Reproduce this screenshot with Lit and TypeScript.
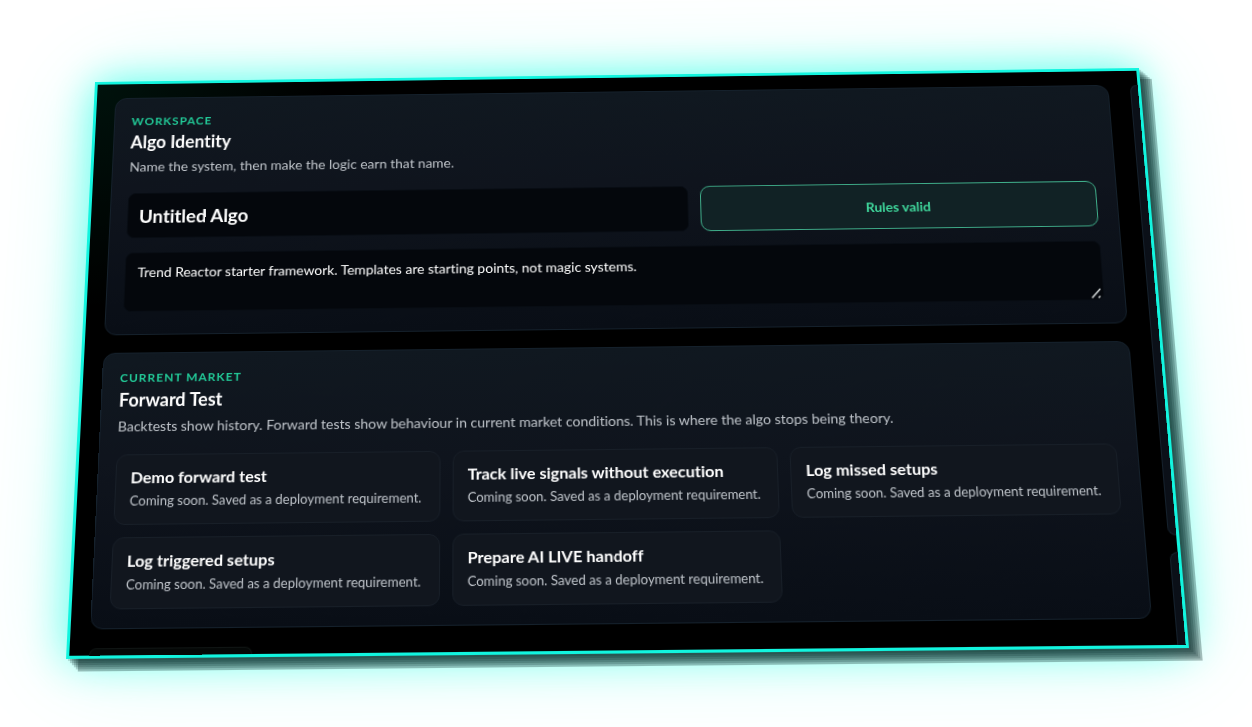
import { LitElement, html, css } from "lit";
import { customElement, property, state } from "lit/decorators.js";

interface Requirement {
  title: string;
  note: string;
}

const NOTE = "Coming soon. Saved as a deployment requirement.";

@customElement("section-card")
class SectionCard extends LitElement {
  @property() eyebrow = "";
  @property() heading = "";
  @property() description = "";

  static styles = css`
    :host {
      display: block;
    }
    .card {
      border: 1px solid #15212c;
      border-radius: 12px;
      padding: 17px 20px 18px 17px;
      background: linear-gradient(180deg, #101820 0%, #0f141d 40%, #090e16 100%);
    }
    .eyebrow {
      margin: 0;
      color: #22c997;
      font-size: 12px;
      line-height: 16px;
      font-weight: 700;
      letter-spacing: 1px;
      text-transform: uppercase;
    }
    .heading {
      margin: 0;
      color: #fff;
      font-size: 18px;
      line-height: 28px;
      font-weight: 700;
    }
    .description {
      margin: 0 0 15px;
      color: #bfc4ca;
      font-size: 14px;
      line-height: 26px;
    }
  `;

  render() {
    return html`
      <section class="card">
        <p class="eyebrow">${this.eyebrow}</p>
        <h2 class="heading">${this.heading}</h2>
        <p class="description">${this.description}</p>
        <slot></slot>
      </section>
    `;
  }
}

@customElement("app-root")
class AppRoot extends LitElement {
  @state() private algoName = "Untitled Algo";
  @state() private notes =
    "Trend Reactor starter framework. Templates are starting points, not magic systems.";

  private requirements: Requirement[] = [
    { title: "Demo forward test", note: NOTE },
    { title: "Track live signals without execution", note: NOTE },
    { title: "Log missed setups", note: NOTE },
    { title: "Log triggered setups", note: NOTE },
    { title: "Prepare AI LIVE handoff", note: NOTE },
  ];

  static styles = css`
    :host {
      display: block;
      box-sizing: border-box;
      min-height: 100vh;
      padding: 82px 77px 54px 95px;
      overflow: hidden;
      background: #fff;
      font-family: Lato, "Liberation Sans", sans-serif;
      font-variant-ligatures: none;
    }
    * {
      box-sizing: border-box;
    }
    /* The whole panel is tilted away from the viewer around its top left corner. */
    .panel {
      display: grid;
      grid-template-columns: minmax(0, 1fr) 8px;
      column-gap: 22px;
      padding: 15px 0 0 19px;
      border: 3px solid #12f5df;
      background: radial-gradient(circle at 0 0, #00120c 0, #000 240px);
      transform-origin: 0 0;
      transform: matrix3d(
        0.960382, -0.012879, 0, -0.000006019,
        -0.045709, 0.909453, 0, -0.00011874,
        0, 0, 1, 0,
        0, 0, 0, 1
      );
      will-change: transform;
      box-shadow:
        2px 2px 0 rgba(0, 32, 30, 0.15),
        4px 4px 0 rgba(0, 32, 30, 0.2),
        6px 6px 0 rgba(0, 32, 30, 0.2),
        8px 8px 0 rgba(0, 32, 30, 0.2),
        10px 10px 0 rgba(0, 32, 30, 0.2),
        12px 12px 0 rgba(0, 32, 30, 0.3),
        0 0 40px rgba(0, 255, 225, 0.6),
        0 0 90px rgba(0, 255, 225, 0.2);
    }
    .main {
      display: flex;
      flex-direction: column;
      gap: 18px;
    }
    .rail {
      display: grid;
      grid-template-rows: 464px 1fr;
      gap: 16px;
    }
    .rail-card {
      border: 1px solid #15212c;
      border-right: 0;
      border-radius: 12px 0 0 12px;
      background: #0b1018;
    }
    .rail-card:last-child {
      border-bottom: 0;
      border-bottom-left-radius: 0;
    }
    .identity {
      display: grid;
      grid-template-columns: 1.42fr 1fr;
      gap: 15px 12px;
      padding-bottom: 5px;
    }
    .name,
    .notes {
      display: block;
      width: 100%;
      margin: 0;
      border: 1px solid #080d14;
      border-radius: 8px;
      background: #04070c;
      color: #fff;
      font-family: inherit;
      font-variant-ligatures: inherit;
      outline: none;
    }
    .name {
      height: 48px;
      padding: 0 11px;
      font-size: 19px;
      font-weight: 700;
    }
    .notes {
      grid-column: 1 / -1;
      height: 62px;
      padding: 10px 12px;
      font-size: 14px;
      line-height: 20px;
      resize: vertical;
    }
    .notes::-webkit-resizer {
      background: url("data:image/svg+xml,%3Csvg xmlns='http://www.w3.org/2000/svg' viewBox='0 0 15 15'%3E%3Cpath d='M4 13 12 4.500M10.500 13l1-1' stroke='%23d8dcdc' stroke-width='1.500' stroke-linecap='round'/%3E%3C/svg%3E")
        center / 15px 15px no-repeat;
    }
    .status {
      border: 1px solid #3fae8a;
      border-radius: 10px;
      background: #112225;
      color: #3fd69b;
      font-family: inherit;
      font-size: 14px;
      font-weight: 700;
    }
    .tiles {
      display: grid;
      grid-template-columns: repeat(3, minmax(0, 1fr));
      gap: 12px;
      margin: 0;
      padding: 0;
      list-style: none;
    }
    .tile {
      border: 1px solid #181f28;
      border-radius: 11px;
      padding: 10px 14px 12px;
      background: #11161e;
    }
    .tile-title {
      margin: 0;
      color: #fff;
      font-size: 16px;
      line-height: 24px;
      font-weight: 700;
    }
    .tile-note {
      margin: 0;
      color: #bfc4ca;
      font-size: 13px;
      line-height: 22px;
    }
    .next {
      width: 158px;
      height: 7px;
      border: 1px solid #101514;
      border-bottom: 0;
      border-radius: 7px 7px 0 0;
      background: #050807;
    }
  `;

  render() {
    return html`
      <div class="panel">
        <main class="main">
          <section-card
            eyebrow="Workspace"
            heading="Algo Identity"
            description="Name the system, then make the logic earn that name."
          >
            <div class="identity">
              <input
                class="name"
                type="text"
                aria-label="Algo name"
                .value=${this.algoName}
                @input=${(e: Event) => (this.algoName = (e.target as HTMLInputElement).value)}
              />
              <button class="status" type="button">Rules valid</button>
              <textarea
                class="notes"
                aria-label="Algo notes"
                .value=${this.notes}
                @input=${(e: Event) => (this.notes = (e.target as HTMLTextAreaElement).value)}
              ></textarea>
            </div>
          </section-card>
          <section-card
            eyebrow="Current market"
            heading="Forward Test"
            description="Backtests show history. Forward tests show behaviour in current market conditions. This is where the algo stops being theory."
          >
            <ul class="tiles">
              ${this.requirements.map(
                (r) => html`
                  <li class="tile">
                    <h3 class="tile-title">${r.title}</h3>
                    <p class="tile-note">${r.note}</p>
                  </li>
                `
              )}
            </ul>
          </section-card>
          <div class="next"></div>
        </main>
        <aside class="rail">
          <div class="rail-card"></div>
          <div class="rail-card"></div>
        </aside>
      </div>
    `;
  }
}
